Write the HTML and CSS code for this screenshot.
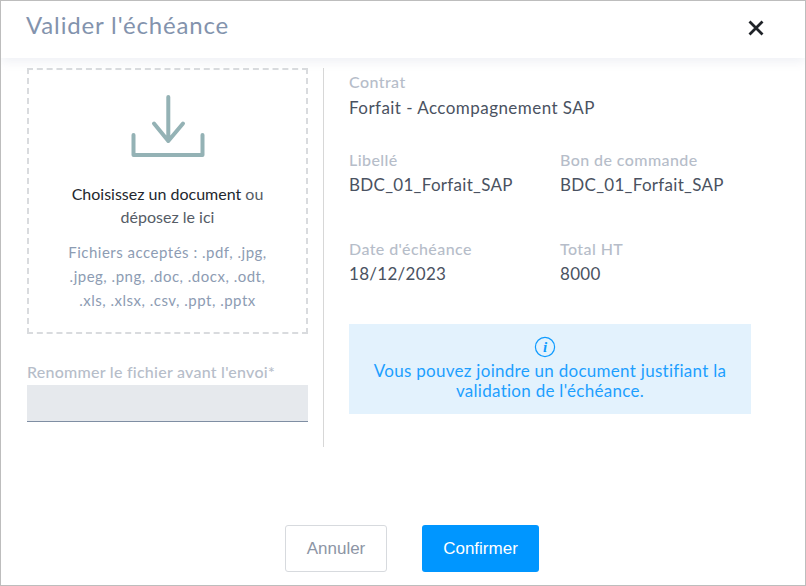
FILE: index.html
```html
<!DOCTYPE html>
<html lang="fr">
<head>
<meta charset="utf-8">
<title>Valider l'échéance</title>
<link rel="stylesheet" href="styles.css">
</head>
<body>
<div class="modal">
  <header class="head">
    <h1 class="title">Valider l'échéance</h1>
    <svg class="close" width="16" height="16" viewBox="0 0 16 16"><path d="M1.5 1.5 L14.5 14.5 M14.5 1.5 L1.5 14.5" stroke="#1f2328" stroke-width="2.8" fill="none"/></svg>
  </header>
  <main class="body">
    <section class="left">
      <div class="drop">
        <svg class="dl" width="74" height="64" viewBox="0 0 74 64"><path d="M37.3 3 V47 M23 29.5 L37.3 47 L52 29.5 M2.5 41 V61 H71.5 V41" stroke="#94b2b5" stroke-width="4" stroke-linecap="round" stroke-linejoin="round" fill="none"/></svg>
        <p class="choose"><span class="dark">Choisissez un document</span> ou<br>déposez le ici</p>
        <p class="types">Fichiers acceptés : .pdf, .jpg,<br>.jpeg, .png, .doc, .docx, .odt,<br>.xls, .xlsx, .csv, .ppt, .pptx</p>
      </div>
      <label class="label rename">Renommer le fichier avant l'envoi*</label>
      <div class="input"></div>
    </section>
    <section class="right">
      <div class="field"><div class="label">Contrat</div><div class="value contract">Forfait - Accompagnement SAP</div></div>
      <div class="grid">
        <div class="field"><div class="label">Libellé</div><div class="value">BDC_01_Forfait_SAP</div></div>
        <div class="field"><div class="label">Bon de commande</div><div class="value">BDC_01_Forfait_SAP</div></div>
        <div class="field"><div class="label">Date d'échéance</div><div class="value">18/12/2023</div></div>
        <div class="field"><div class="label">Total HT</div><div class="value">8000</div></div>
      </div>
      <div class="info">
        <svg class="i" width="22" height="22" viewBox="0 0 22 22"><circle cx="11" cy="11" r="9.6" stroke="#0f9bff" stroke-width="1.2" fill="none"/><text x="11" y="16" text-anchor="middle" class="i-t">i</text></svg>
        <p class="info-t">Vous pouvez joindre un document justifiant la<br>validation de l'échéance.</p>
      </div>
    </section>
  </main>
  <footer class="foot">
    <button class="btn cancel">Annuler</button>
    <button class="btn ok">Confirmer</button>
  </footer>
</div>
</body>
</html>
```
FILE: styles.css
```css
* { box-sizing: border-box; }
html, body { margin: 0; padding: 0; height: 100%; background: #fff; }
body { font-family: "Lato", "Liberation Sans", sans-serif; }
.modal { width: 806px; height: 586px; border: 1px solid #bdbdbd; display: flex; flex-direction: column; overflow: hidden; }
.head { height: 57px; flex: none; display: flex; align-items: center; justify-content: space-between; padding: 0 41px 4px 25px; box-shadow: 0 3px 10px rgba(130,145,175,.14); position: relative; }
.title { margin: 0 0 6px; font-size: 24px; font-weight: 400; color: #8393ad; letter-spacing: .85px; }
.close { display: block; }
.body { flex: 1; display: flex; padding: 10px 0 0 26px; }
.left { width: 281px; flex: none; }
.drop { height: 266px; border: 2px dashed #d9dbde; display: flex; flex-direction: column; align-items: center; padding-top: 24px; text-align: center; }
.dl { display: block; }
.choose { margin: 24px 0 0; font-size: 16px; line-height: 23px; color: #555c66; }
.dark { color: #23272e; }
.types { margin: 12px 0 0; font-size: 15px; line-height: 24px; color: #8d9cb3; letter-spacing: .5px; }
.label { display: block; font-size: 16px; line-height: 20px; color: #b6bdc9; font-weight: 500; letter-spacing: .42px; }
.rename { margin: 28px 0 3px; letter-spacing: .25px; }
.input { height: 37px; background: #e6e9ed; border-bottom: 1px solid #7f8ea3; }
.right { width: 428px; height: 379px; margin-left: 15px; border-left: 1px solid #d7d7d7; padding: 4px 0 0 25px; }
.field { height: 48px; }
.value { font-size: 17px; line-height: 24px; color: #4a5261; margin-top: 3px; letter-spacing: .3px; }
.contract { margin-top: 4px; letter-spacing: .45px; }
.grid { display: grid; grid-template-columns: 211px 191px; row-gap: 41px; margin-top: 30px; }
.info { width: 402px; height: 90px; margin-top: 37px; background: #e3f2fd; display: flex; flex-direction: column; align-items: center; padding-top: 12px; text-align: center; }
.i { display: block; margin-right: 11px; }
.i-t { font-family: "Liberation Serif", serif; font-style: italic; font-weight: 700; font-size: 15px; fill: #0f9bff; }
.info-t { margin: 3px 0 0; font-size: 17px; line-height: 20px; color: #1d9fff; letter-spacing: .28px; }
.foot { flex: none; height: 60px; display: flex; justify-content: center; gap: 35px; padding-left: 18px; }
.btn { height: 47px; font-family: "Liberation Sans", sans-serif; font-size: 17px; border-radius: 3px; }
.cancel { width: 102px; background: #fff; border: 1px solid #d7dade; color: #8d95a5; }
.ok { width: 117px; background: #0096ff; border: 0; color: #fff; }
```
